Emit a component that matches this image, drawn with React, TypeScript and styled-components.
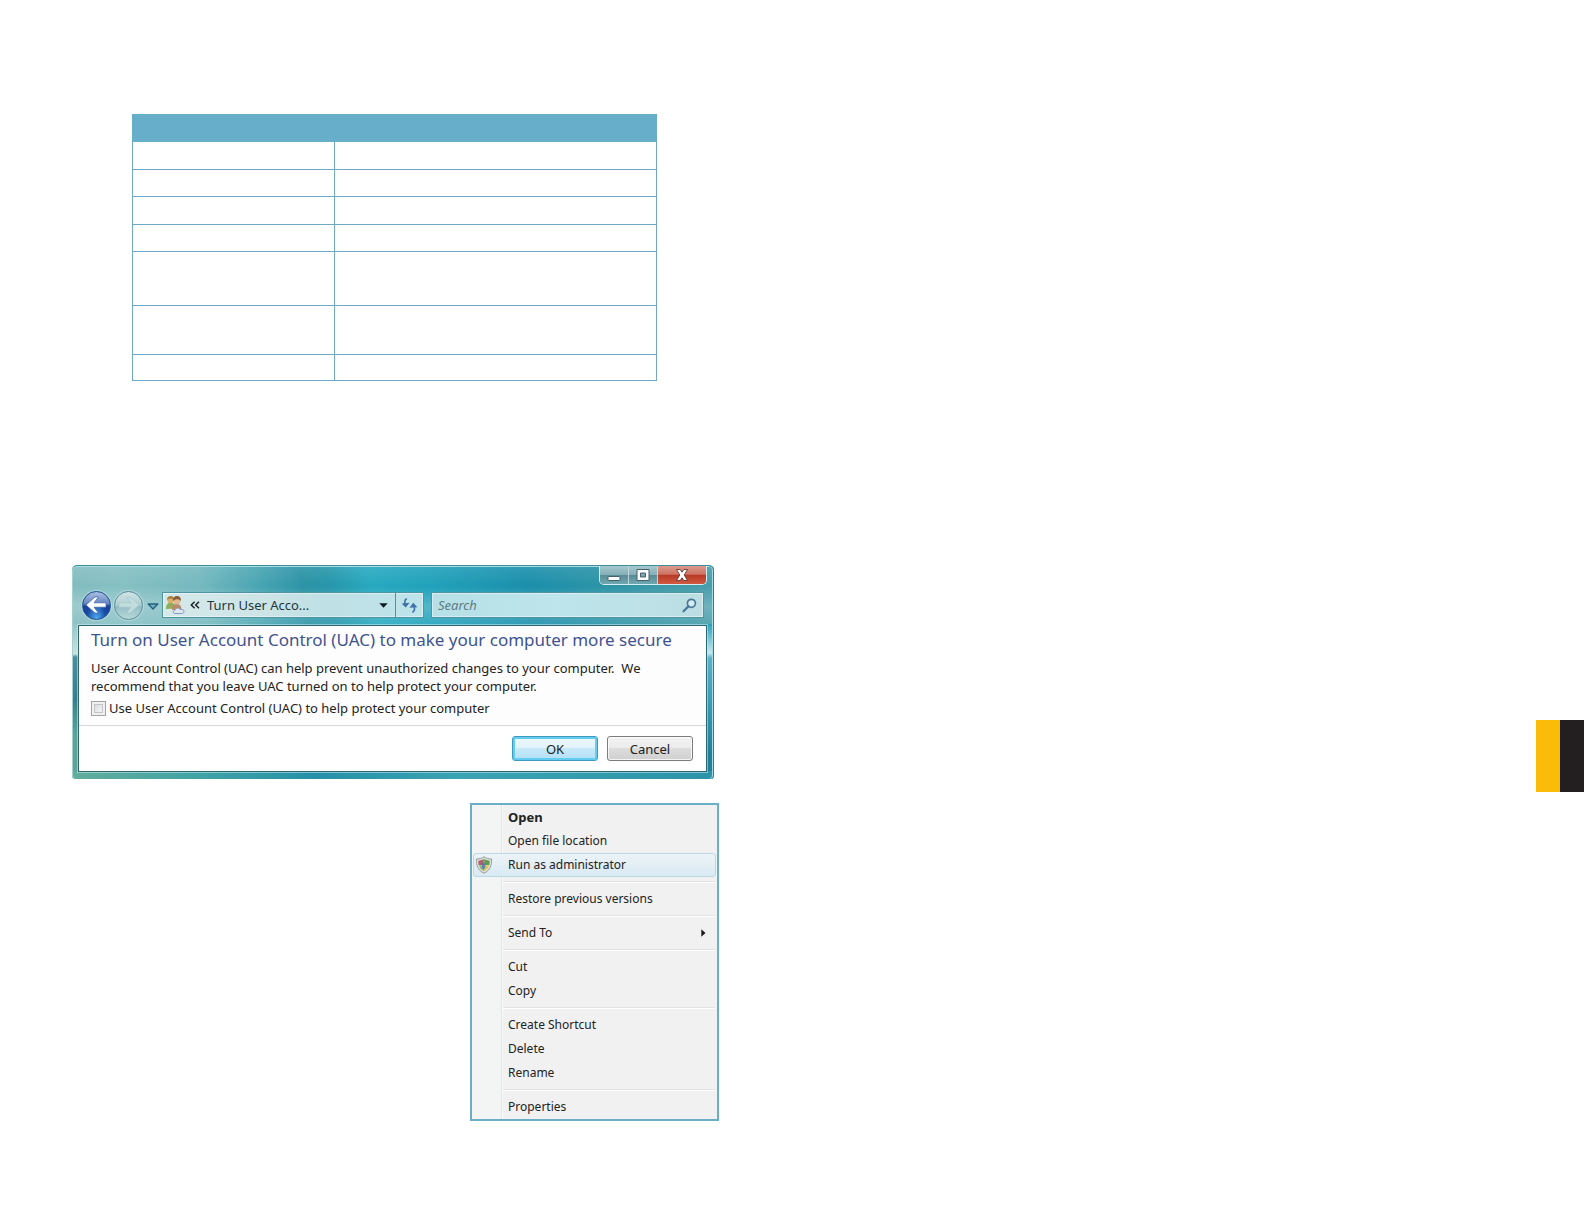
import React from 'react';
import styled, { createGlobalStyle, css } from 'styled-components';

const RULE = '#6fa9c6';
const BAND = '#67aecb';

const GlobalStyle = createGlobalStyle`
  *, *::before, *::after { box-sizing: border-box; }
  body {
    margin: 0;
    background: #fff;
    color: #222;
    font-family: "Noto Sans", "Open Sans", sans-serif;
    font-size: 13px;
  }
  button, input { font: inherit; color: inherit; }
`;

const Spread = styled.main`
  display: flex;
  align-items: flex-start;
  min-height: 100vh;
`;

const LeftPage = styled.div`
  display: flex;
  flex-direction: column;
  width: 720px;
  padding: 114px 1px 0 72px;
`;

const RightPage = styled.div`
  display: flex;
  flex: 1;
  justify-content: flex-end;
  padding-top: 720px;
`;

const ThumbTab = styled.div`
  width: 48px;
  height: 72px;
  background: linear-gradient(to right, #fbbc09 50%, #231f20 50%);
`;

/* ---------- ruled table ---------- */

const RuledTable = styled.table`
  width: 525px;
  margin: 0 0 184px 60px;
  border-collapse: collapse;
  table-layout: fixed;
`;

const FirstColumn = styled.col`
  width: 202px;
`;

const HeadCell = styled.th`
  height: 27px;
  padding: 0;
  background: ${BAND};
  border: 1px solid ${BAND};
`;

const BodyRow = styled.tr<{ $height: number }>`
  height: ${({ $height }) => $height}px;
`;

const Cell = styled.td`
  padding: 0;
  border: 1px solid ${RULE};
`;

/* ---------- Vista window ---------- */

const Window = styled.section`
  display: flex;
  flex-direction: column;
  width: 642px;
  height: 214px;
  margin-bottom: 24px;
  padding: 0 7px 7px 6px;
  border-radius: 5px 5px 4px 4px;
  border-top: 1px solid #3d8d9c;
  box-shadow: inset 1px 0 #a5d0d2, inset -1px 0 #2b7f92, inset -2px 0 #a4dbe6, inset 0 1px #a9dde2;
  background:
    linear-gradient(to right, #62ad9b, #41a3a6 20%, #2590a8 38%, #3aa4b4 60%, #2c93a8) 0 100% / 100% 8px no-repeat,
    linear-gradient(to bottom, #96c6c8, #cbe2de 30px, #4b909c 33px, #357f8c 75px, #5aa596 110px) 0 58px / 8px 100% no-repeat,
    linear-gradient(to bottom, #2ba0b8, #c4eaf0 29px, #5ab2c6 34px, #3a9bb2 80px, #227f98 130px) 100% 58px / 9px 100% no-repeat,
    linear-gradient(to bottom, rgba(255,255,255,.1), rgba(255,255,255,0) 20px, rgba(255,255,255,.22) 40px, rgba(255,255,255,.1) 58px),
    linear-gradient(80deg, #7fb9bc 0, #86c0c4 12%, #74b8be 24%, #46a4b2 33%, #2b93a6 39%, #2596aa 43%, #27a9c0 49%, #20a1bb 58%, #1a8fab 72%, #2c93a6 84%, #4a9eaa 100%);
`;

const Caption = styled.div`
  display: flex;
  justify-content: flex-end;
  height: 20px;
`;

const CaptionGroup = styled.div`
  display: flex;
  height: 19px;
  border: 1px solid #d3edf2;
  border-top: 0;
  border-radius: 0 0 5px 5px;
  overflow: hidden;
`;

const CaptionButton = styled.button<{ $close?: boolean }>`
  display: flex;
  align-items: center;
  justify-content: center;
  width: 29px;
  height: 18px;
  padding: 0;
  border: 0;
  border-right: 1px solid #bfd7dc;
  background: linear-gradient(#a5c9cf 0, #86aeb6 48%, #5b8c96 52%, #6fa7b1 100%);
  ${({ $close }) =>
    $close &&
    css`
      width: 48px;
      border-right: 0;
      background: linear-gradient(#dc9a8c 0, #cc7261 46%, #b93a26 52%, #cf5a40 100%);
    `}
`;

const NavBar = styled.div`
  display: flex;
  align-items: center;
  height: 39px;
  padding: 0 3px 1px 4px;
`;

const TravelButton = styled.button<{ $muted?: boolean }>`
  display: flex;
  flex: none;
  align-items: center;
  justify-content: center;
  width: 29px;
  height: 29px;
  margin-right: 3px;
  padding: 0;
  border: 1px solid ${({ $muted }) => ($muted ? '#5f8f99' : '#24508c')};
  border-radius: 50%;
  background: ${({ $muted }) =>
    $muted
      ? 'linear-gradient(#cfe3e5 0, #b0d0d3 48%, #94bdc2 52%, #b6d9db 100%)'
      : 'radial-gradient(ellipse at 50% 105%, #4fb2f0 0, rgba(50,120,220,0) 50%), linear-gradient(#a9bfe2 0, #6484bf 44%, #17419a 52%, #1c50b0 100%)'};
  box-shadow: 0 0 0 1px rgba(205, 232, 238, 0.5);
`;

const HistoryButton = styled.button`
  display: flex;
  width: 12px;
  margin: 3px 3px 0 1px;
  padding: 0;
  border: 0;
  background: none;
`;

const Field = styled.div`
  display: flex;
  align-items: center;
  height: 26px;
  border: 1px solid #4e94a1;
  box-shadow: inset 0 0 0 1px rgba(255, 255, 255, 0.45);
`;

const AddressBar = styled(Field)`
  width: 262px;
  margin-right: 7px;
  padding-left: 2px;
  background: linear-gradient(to right, #d6e9ea 0, #cce4e6 40%, #bfe0e5 60%, #bde4ea 100%);
`;

const SearchBox = styled(Field)`
  flex: 1;
  padding-right: 6px;
  background: linear-gradient(to right, #b6dfe6 0, #bde5eb 45%, #bcdee3 100%);
`;

const Chevrons = styled.button`
  display: flex;
  margin: 0 7px 0 5px;
  padding: 0;
  border: 0;
  background: none;
`;

const Crumb = styled.button`
  flex: 1;
  padding: 0;
  border: 0;
  background: none;
  color: #23363c;
  line-height: 20px;
  text-align: left;
`;

const FieldButton = styled.button<{ $ruled?: boolean }>`
  display: flex;
  align-items: center;
  justify-content: center;
  align-self: stretch;
  width: ${({ $ruled }) => ($ruled ? 28 : 24)}px;
  padding: 0;
  border: 0;
  border-left: ${({ $ruled }) => ($ruled ? '1px solid #4e94a1' : '0')};
  background: none;
`;

const SearchInput = styled.input`
  flex: 1;
  min-width: 0;
  padding: 0 0 0 6px;
  border: 0;
  background: none;
  outline: 0;
  line-height: 20px;
  &::placeholder {
    color: #5f7b82;
    font-style: italic;
    opacity: 1;
  }
`;

const Client = styled.form`
  display: flex;
  flex: 1;
  flex-direction: column;
  border: 1px solid #2c6674;
  background: #fdfdfd;
  box-shadow: 0 0 0 1px rgba(200, 236, 242, 0.55);
`;

const Body = styled.div`
  flex: 1;
  padding: 2px 12px 0;
`;

const Title = styled.h1`
  margin: 0;
  color: #3f548f;
  font-size: 17px;
  font-weight: 400;
  line-height: 24px;
  white-space: nowrap;
`;

const Message = styled.p`
  margin: 7px 0 4px;
  line-height: 18px;
  white-space: pre-line;
`;

const Option = styled.label`
  display: flex;
  align-items: center;
  gap: 3px;
  line-height: 18px;
`;

const TickBox = styled.input`
  appearance: none;
  width: 15px;
  height: 15px;
  margin: 0;
  border: 1px solid #a3a4a6;
  background: linear-gradient(135deg, #cfd1d4, #f6f6f7 80%);
  box-shadow: inset 0 0 0 2px #f0f0f0, inset 0 0 0 3px #c3c5c9;
`;

const Footer = styled.div`
  display: flex;
  align-items: center;
  justify-content: flex-end;
  gap: 9px;
  height: 46px;
  padding: 0 13px 0 0;
  border-top: 1px solid #d4d6d9;
  background: #fff;
`;

const DialogButton = styled.button<{ $primary?: boolean }>`
  width: 86px;
  height: 25px;
  padding: 0;
  border: 1px solid #7c7c7e;
  border-radius: 3px;
  background: linear-gradient(#f3f3f3 0, #ebebeb 48%, #dcdcdc 50%, #d0d0d0 100%);
  box-shadow: inset 0 0 0 1px rgba(255, 255, 255, 0.75);
  line-height: 20px;
  ${({ $primary }) =>
    $primary &&
    css`
      border-color: #3f9bbd;
      background: linear-gradient(#eef8fc 0, #e2f3fb 48%, #c8e9f9 50%, #b2e0f6 100%);
      box-shadow: inset 0 0 0 2px #62cdf0;
    `}
`;

/* ---------- context menu ---------- */

const Menu = styled.div`
  display: flex;
  flex-direction: column;
  align-self: flex-end;
  width: 249px;
  border: 2px solid #6aaec8;
  background: linear-gradient(to right, #f3f4f4 0, #f3f4f4 29px, #e3e4e4 29px, #e3e4e4 30px, #fbfbfb 30px, #fbfbfb 31px, #f1f1f1 31px);
  font-size: 12px;
`;

const MenuGroup = styled.div`
  & + & {
    padding-top: 4px;
  }
  & + &::before {
    content: "";
    display: block;
    height: 2px;
    margin: 0 2px 4px 31px;
    border-top: 1px solid #e2e3e3;
    border-bottom: 1px solid #fff;
  }
`;

const MenuItem = styled.button<{ $bold?: boolean; $active?: boolean }>`
  display: grid;
  grid-template-columns: 33px 1fr 14px;
  align-items: center;
  width: 243px;
  height: 24px;
  margin-left: 1px;
  padding: 0 0 1px 1px;
  border: 1px solid transparent;
  border-radius: 3px;
  background: none;
  font-size: ${({ $bold }) => ($bold ? 13 : 12)}px;
  font-weight: ${({ $bold }) => ($bold ? 700 : 400)};
  line-height: 20px;
  text-align: left;
  ${({ $active }) =>
    $active &&
    css`
      border-color: #b9d8e6;
      background: linear-gradient(rgba(236, 243, 248, 0.9), rgba(214, 233, 243, 0.9));
    `}
`;

const Glyph = styled.span`
  display: flex;
`;

/* ---------- drawings ---------- */

const PeopleIcon = () => (
  <svg width="20" height="20" viewBox="0 0 20 20" aria-hidden="true">
    <path d="M1 14c0-5 2-6.500 5-6.500s4 2 4 6z" fill="#8fae5a" />
    <circle cx="5.500" cy="5" r="3.200" fill="#d8ae6a" />
    <path d="M2 5c0-3 1.500-4 3.600-4S9 2 9 4.500C7 3 4 3 2 5z" fill="#a67c3c" />
    <path d="M7 15c0-5 2-6 4.600-6s4.900 1.500 4.900 6z" fill="#b98a68" />
    <circle cx="12" cy="5.800" r="3.600" fill="#dfb68e" />
    <path d="M8 6c-.3-3.500 1.500-5 4-5s4.300 1.800 3.900 5C14 3.600 10.500 3.600 8 6z" fill="#8c5c3c" />
    <path d="M9.500 18.500c-1.500 0-2-2.500.3-3 .2-2.500 4-3.300 5.200-1.100 2.700-.6 4.500 1 3.900 2.600-.3 1-1 1.500-2 1.500z" fill="#dfe7f3" stroke="#7d93b8" strokeWidth=".9" />
  </svg>
);

const ShieldIcon = () => (
  <svg width="18" height="18" viewBox="0 0 18 18" aria-hidden="true">
    <path d="M9 .8C11 2.300 13.500 2.900 16.500 2.900c.5 6.600-1.500 11.500-7.500 14.300C3 14.400 1 9.500 1.500 2.900 4.500 2.900 7 2.300 9 .8z" fill="#dfe0db" stroke="#8f9791" strokeWidth=".9" />
    <path d="M8.800 3C7.200 4 5.500 4.400 3.400 4.600c-.1 1.700 0 3 .3 4.400h5.100z" fill="#b0606c" />
    <path d="M9.200 3c1.600 1 3.300 1.400 5.400 1.600.1 1.700 0 3-.3 4.400H9.200z" fill="#5c9c4a" />
    <path d="M3.800 9.300c.8 2.600 2.300 4.600 5 6V9.300z" fill="#8aba7a" />
    <path d="M14.200 9.300c-.8 2.600-2.300 4.600-5 6V9.300z" fill="#e0c860" />
    <path d="M7 7l3 .5.5 3.500-1.700 3-1.600-2z" fill="#4f68b8" opacity=".75" />
  </svg>
);

const ArrowIcon = ({ back }: { back?: boolean }) => (
  <svg width="23" height="20" viewBox="0 0 23 20" aria-hidden="true">
    <path
      d={back ? 'M1 10L10 2h3.500L9 7.800h12v4.400H9l4.500 5.800H10z' : 'M22 10L13 2H9.500L14 7.800H2v4.400h12L9.500 18H13z'}
      fill={back ? '#fff' : '#c3dddf'}
      stroke={back ? '#3a5fa8' : '#a3c8cb'}
      strokeWidth=".7"
    />
  </svg>
);

const HistoryIcon = () => (
  <svg width="12" height="7" viewBox="0 0 12 7" aria-hidden="true">
    <path d="M1.200 1h9.600L6 6z" fill="#6fb6c6" stroke="#235f7c" strokeWidth="1.300" strokeLinejoin="round" />
  </svg>
);

const ChevronsIcon = () => (
  <svg width="10" height="8" viewBox="0 0 10 8" aria-hidden="true">
    <path d="M4.600.8L1.300 4l3.300 3.200M9 .8L5.700 4 9 7.200" fill="none" stroke="#1a2327" strokeWidth="1.500" />
  </svg>
);

const CaretIcon = () => (
  <svg width="9" height="5" viewBox="0 0 9 5" aria-hidden="true">
    <path d="M.3.3h8.400L4.500 4.800z" fill="#0d1b20" />
  </svg>
);

const RefreshIcon = () => (
  <svg width="17" height="15" viewBox="0 0 17 15" aria-hidden="true">
    <path d="M5.800.6C3.800 1.600 3.600 4 4.200 6" fill="none" stroke="#3f70a8" strokeWidth="1.600" />
    <path d="M.6 5.400l8-.6-3.900 4.700z" fill="#3f70a8" />
    <path d="M11.400 14.400c2-1 2.400-3.400 1.700-5.400" fill="none" stroke="#3f70a8" strokeWidth="1.600" />
    <path d="M8.400 9.800l8-.6-4.100-4.400z" fill="#3f70a8" />
  </svg>
);

const SearchIcon = () => (
  <svg width="15" height="15" viewBox="0 0 15 15" aria-hidden="true">
    <circle cx="9.400" cy="5.300" r="4" fill="#d5ecf2" stroke="#4a7898" strokeWidth="1.700" />
    <path d="M6.400 8.400L1.500 13.300" stroke="#4a7898" strokeWidth="2.200" strokeLinecap="round" />
  </svg>
);

const MinimizeIcon = () => (
  <svg width="14" height="14" viewBox="0 0 14 14" aria-hidden="true">
    <rect x="1" y="8.500" width="12" height="4" rx=".5" fill="#fff" stroke="#44606a" />
  </svg>
);

const MaximizeIcon = () => (
  <svg width="14" height="14" viewBox="0 0 14 14" aria-hidden="true">
    <path d="M1 1.500h12v11H1z" fill="#fff" stroke="#44606a" />
    <path d="M4.500 5h5v4h-5z" fill="#7aa5ae" stroke="#44606a" />
  </svg>
);

const CloseIcon = () => (
  <svg width="14" height="14" viewBox="0 0 14 14" aria-hidden="true">
    <path
      d="M1.500 1.500h3.700L7 4.200l1.800-2.700h3.700L9.200 7l3.300 5.500H8.800L7 9.800l-1.800 2.700H1.500L4.800 7z"
      fill="#fff"
      stroke="#6a3a36"
      strokeWidth=".9"
    />
  </svg>
);

const SubmenuIcon = () => (
  <svg width="5" height="8" viewBox="0 0 5 8" aria-hidden="true">
    <path d="M.3.300L4.500 4 .3 7.700z" fill="#1c1c1c" />
  </svg>
);

/* ---------- content ---------- */

const rowHeights = [28, 27, 28, 27, 54, 49, 26];

type Entry = { label: string; bold?: boolean; shield?: boolean; submenu?: boolean };

const menuGroups: Entry[][] = [
  [{ label: 'Open', bold: true }, { label: 'Open file location' }, { label: 'Run as administrator', shield: true }],
  [{ label: 'Restore previous versions' }],
  [{ label: 'Send To', submenu: true }],
  [{ label: 'Cut' }, { label: 'Copy' }],
  [{ label: 'Create Shortcut' }, { label: 'Delete' }, { label: 'Rename' }],
  [{ label: 'Properties' }],
];

function SettingsTable() {
  return (
    <RuledTable>
      <colgroup>
        <FirstColumn />
        <col />
      </colgroup>
      <thead>
        <tr>
          <HeadCell colSpan={2} />
        </tr>
      </thead>
      <tbody>
        {rowHeights.map((height, i) => (
          <BodyRow key={i} $height={height}>
            <Cell />
            <Cell />
          </BodyRow>
        ))}
      </tbody>
    </RuledTable>
  );
}

function UacWindow() {
  return (
    <Window>
      <Caption>
        <CaptionGroup>
          <CaptionButton aria-label="Minimize"><MinimizeIcon /></CaptionButton>
          <CaptionButton aria-label="Maximize"><MaximizeIcon /></CaptionButton>
          <CaptionButton aria-label="Close" $close><CloseIcon /></CaptionButton>
        </CaptionGroup>
      </Caption>
      <NavBar>
        <TravelButton aria-label="Back"><ArrowIcon back /></TravelButton>
        <TravelButton aria-label="Forward" $muted><ArrowIcon /></TravelButton>
        <HistoryButton aria-label="Recent pages"><HistoryIcon /></HistoryButton>
        <AddressBar>
          <PeopleIcon />
          <Chevrons aria-label="Parent folders"><ChevronsIcon /></Chevrons>
          <Crumb>Turn User Acco...</Crumb>
          <FieldButton aria-label="Previous locations"><CaretIcon /></FieldButton>
          <FieldButton aria-label="Refresh" $ruled><RefreshIcon /></FieldButton>
        </AddressBar>
        <SearchBox>
          <SearchInput type="text" aria-label="Search" placeholder="Search" />
          <SearchIcon />
        </SearchBox>
      </NavBar>
      <Client onSubmit={(e) => e.preventDefault()}>
        <Body>
          <Title>Turn on User Account Control (UAC) to make your computer more secure</Title>
          <Message>
            {'User Account Control (UAC) can help prevent unauthorized changes to your computer.\u00a0 We\nrecommend that you leave UAC turned on to help protect your computer.'}
          </Message>
          <Option htmlFor="use-uac">
            <TickBox type="checkbox" id="use-uac" />
            Use User Account Control (UAC) to help protect your computer
          </Option>
        </Body>
        <Footer>
          <DialogButton type="submit" $primary>OK</DialogButton>
          <DialogButton type="button">Cancel</DialogButton>
        </Footer>
      </Client>
    </Window>
  );
}

function ShortcutMenu() {
  return (
    <Menu role="menu">
      {menuGroups.map((group, i) => (
        <MenuGroup key={i} role="group">
          {group.map(({ label, bold, shield, submenu }) => (
            <MenuItem key={label} role="menuitem" $bold={bold} $active={shield}>
              <Glyph>{shield && <ShieldIcon />}</Glyph>
              {label}
              <Glyph>{submenu && <SubmenuIcon />}</Glyph>
            </MenuItem>
          ))}
        </MenuGroup>
      ))}
    </Menu>
  );
}

export default function App() {
  return (
    <>
      <GlobalStyle />
      <Spread>
        <LeftPage>
          <SettingsTable />
          <UacWindow />
          <ShortcutMenu />
        </LeftPage>
        <RightPage>
          <ThumbTab />
        </RightPage>
      </Spread>
    </>
  );
}
